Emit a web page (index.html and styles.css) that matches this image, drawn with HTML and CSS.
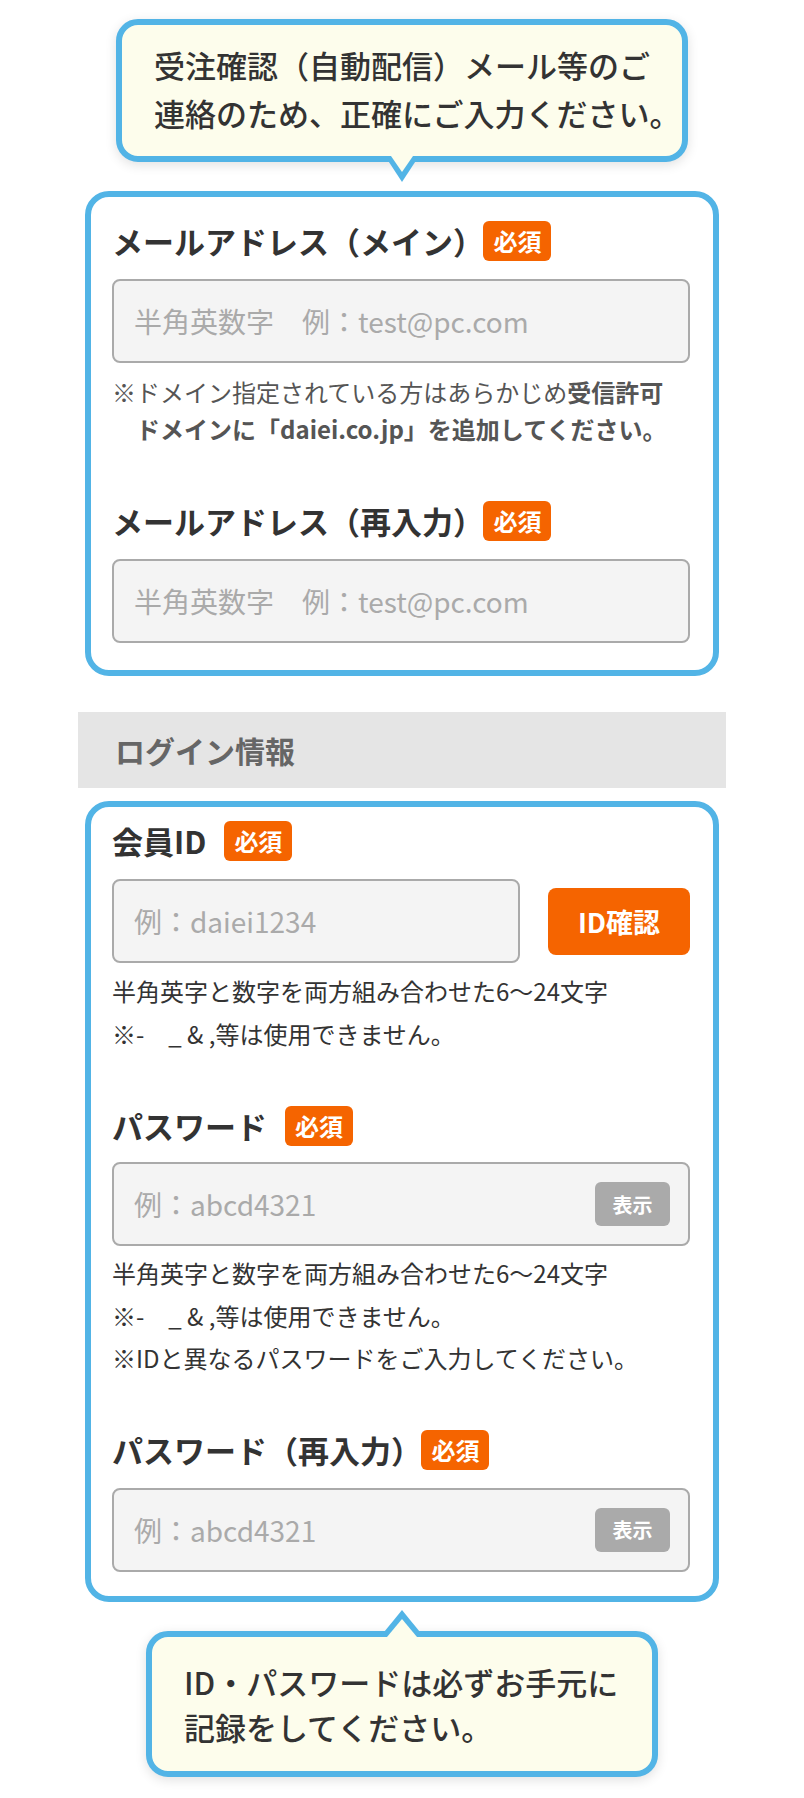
FILE: index.html
```html
<!DOCTYPE html>
<html lang="ja">
<head>
  <meta charset="UTF-8" />
  <meta name="viewport" content="width=device-width, initial-scale=1.0" />
  <title>会員登録</title>
  <link rel="stylesheet" href="styles.css">
</head>
<body>
  <div class="page">
    <div class="balloon balloon-top">
      受注確認（自動配信）メール等のご<br>連絡のため、正確にご入力ください。
    </div>

    <section class="card card-mail">
      <div class="field">
        <div class="field-head">
          <span class="field-label">メールアドレス（メイン<span class="close">）</span></span>
          <span class="req">必須</span>
        </div>
        <input class="text-input" type="text" placeholder="半角英数字　例：test@pc.com" />
        <p class="mail-note">※ドメイン指定されている方はあらかじめ<strong>受信許可<br>ドメインに「daiei.co.jp」を追加してください。</strong></p>
      </div>

      <div class="field">
        <div class="field-head">
          <span class="field-label">メールアドレス（再入力<span class="close">）</span></span>
          <span class="req">必須</span>
        </div>
        <input class="text-input" type="text" placeholder="半角英数字　例：test@pc.com" />
      </div>
    </section>

    <h3 class="section-title">ログイン情報</h3>

    <section class="card card-login">
      <div class="field">
        <div class="field-head">
          <span class="field-label">会員ID</span>
          <span class="req">必須</span>
        </div>
        <div class="id-row">
          <input class="text-input" type="text" placeholder="例：daiei1234" />
          <button class="id-check" type="button">ID確認</button>
        </div>
        <p class="help">半角英字と数字を両方組み合わせた6〜24文字<br>※-　_ &amp; ,等は使用できません。</p>
      </div>

      <div class="field field-pw">
        <div class="field-head">
          <span class="field-label">パスワード</span>
          <span class="req">必須</span>
        </div>
        <div class="pw-box">
          <input class="pw-input" type="password" placeholder="例：abcd4321" />
          <button class="pw-show" type="button">表示</button>
        </div>
        <p class="help help-pw">半角英字と数字を両方組み合わせた6〜24文字<br>※-　_ &amp; ,等は使用できません。<br>※IDと異なるパスワードをご入力してください。</p>
      </div>

      <div class="field">
        <div class="field-head">
          <span class="field-label">パスワード（再入力<span class="close">）</span></span>
          <span class="req">必須</span>
        </div>
        <div class="pw-box">
          <input class="pw-input" type="password" placeholder="例：abcd4321" />
          <button class="pw-show" type="button">表示</button>
        </div>
      </div>
    </section>

    <div class="balloon balloon-bottom">
      ID・パスワードは必ずお手元に<br>記録をしてください。
    </div>
  </div>
</body>
</html>
```

FILE: styles.css
```css
body {
  margin: 0;
  background: #fff;
  font-family: "Noto Sans CJK JP", "Noto Sans", sans-serif;
  color: #333;
}
.page {
  width: 648px;
  margin: 0 auto;
  padding: 19px 0 20px;
}

/* balloons */
.balloon {
  position: relative;
  box-sizing: border-box;
  margin: 0 auto;
  background: #fdfdec;
  border: 6px solid #52b4e6;
  border-radius: 22px;
  box-shadow: 0 3px 12px rgba(0,0,0,0.12);
  font-size: 31px;
  font-weight: 500;
  white-space: nowrap;
}
.balloon::before,
.balloon::after {
  content: "";
  position: absolute;
  left: 50%;
  width: 0;
  height: 0;
}
.balloon-top {
  width: 572px;
  padding: 16px 10px 19px 32px;
  line-height: 48px;
  margin-bottom: 29px;
}
.balloon-top::before {
  top: 100%;
  margin-left: -17px;
  border-top: 26px solid #52b4e6;
  border-left: 17px solid transparent;
  border-right: 17px solid transparent;
}
.balloon-top::after {
  top: 100%;
  margin-left: -11px;
  border-top: 16px solid #fdfdec;
  border-left: 11px solid transparent;
  border-right: 11px solid transparent;
}
.balloon-bottom {
  width: 512px;
  padding: 22px 10px 22px 32px;
  line-height: 45px;
  margin-top: 29px;
}
.balloon-bottom::before {
  bottom: 100%;
  margin-left: -22px;
  border-bottom: 27px solid #52b4e6;
  border-left: 22px solid transparent;
  border-right: 22px solid transparent;
}
.balloon-bottom::after {
  bottom: 100%;
  margin-left: -15px;
  border-bottom: 18px solid #fdfdec;
  border-left: 15px solid transparent;
  border-right: 15px solid transparent;
}

/* cards */
.card {
  margin: 0 7px;
  border: 6px solid #52b4e6;
  border-radius: 24px;
  background: #fff;
}
.card-mail {
  padding: 24px 23px 27px 21px;
}
.card-login {
  padding: 14px 23px 24px 21px;
}
.field + .field {
  margin-top: 54px;
}
.card-login .field + .field {
  margin-top: 51px;
}
.card-login .field-pw + .field {
  margin-top: 50px;
}
.field-head {
  display: flex;
  align-items: center;
  height: 40px;
  margin-bottom: 18px;
}
.field-pw .field-head {
  margin-bottom: 16px;
}
.field-label {
  font-size: 31px;
  font-weight: bold;
  line-height: 40px;
  margin-right: 18px;
  white-space: nowrap;
}
.field-label .close {
  margin-right: -0.6em;
}
.req {
  display: inline-block;
  padding: 0 10px;
  height: 40px;
  line-height: 40px;
  border-radius: 6px;
  background: #f56400;
  color: #fff;
  font-size: 24px;
  font-weight: bold;
}

/* inputs */
.text-input,
.pw-box {
  display: block;
  box-sizing: border-box;
  width: 100%;
  height: 84px;
  border: 2px solid #aaa;
  border-radius: 8px;
  background: #f4f4f4;
}
.text-input {
  padding: 0 20px;
  font-family: inherit;
  font-size: 28px;
  color: #333;
}
.text-input::placeholder,
.pw-input::placeholder {
  color: #aaa;
}
.pw-box {
  display: flex;
  align-items: center;
  padding: 0 18px 0 20px;
}
.pw-input {
  flex: 1;
  min-width: 0;
  height: 100%;
  border: none;
  background: transparent;
  padding: 0;
  font-family: inherit;
  font-size: 28px;
  color: #333;
}
.pw-show {
  width: 75px;
  height: 44px;
  border: none;
  border-radius: 6px;
  background: #aaa;
  color: #fff;
  font-family: inherit;
  font-size: 20px;
  font-weight: bold;
}
.id-row {
  display: flex;
  align-items: center;
  gap: 28px;
}
.id-row .text-input {
  flex: 1;
  width: auto;
  min-width: 0;
}
.id-check {
  width: 142px;
  height: 67px;
  border: none;
  border-radius: 8px;
  background: #f56400;
  color: #fff;
  font-family: inherit;
  font-size: 27px;
  font-weight: bold;
}

/* notes */
.mail-note {
  margin: 10px 0 0;
  padding-left: 1em;
  text-indent: -1em;
  font-size: 24px;
  line-height: 37px;
  color: #555;
}
.mail-note strong {
  font-weight: bold;
}
.help {
  margin: 7px 0 0;
  font-size: 24px;
  line-height: 42.5px;
  color: #333;
}
.help-pw {
  margin-top: 6px;
}

/* section title */
.section-title {
  margin: 36px 0 13px;
  height: 76px;
  padding-left: 37px;
  background: #e5e5e5;
  color: #666;
  font-size: 30px;
  font-weight: bold;
  line-height: 76px;
}
```
